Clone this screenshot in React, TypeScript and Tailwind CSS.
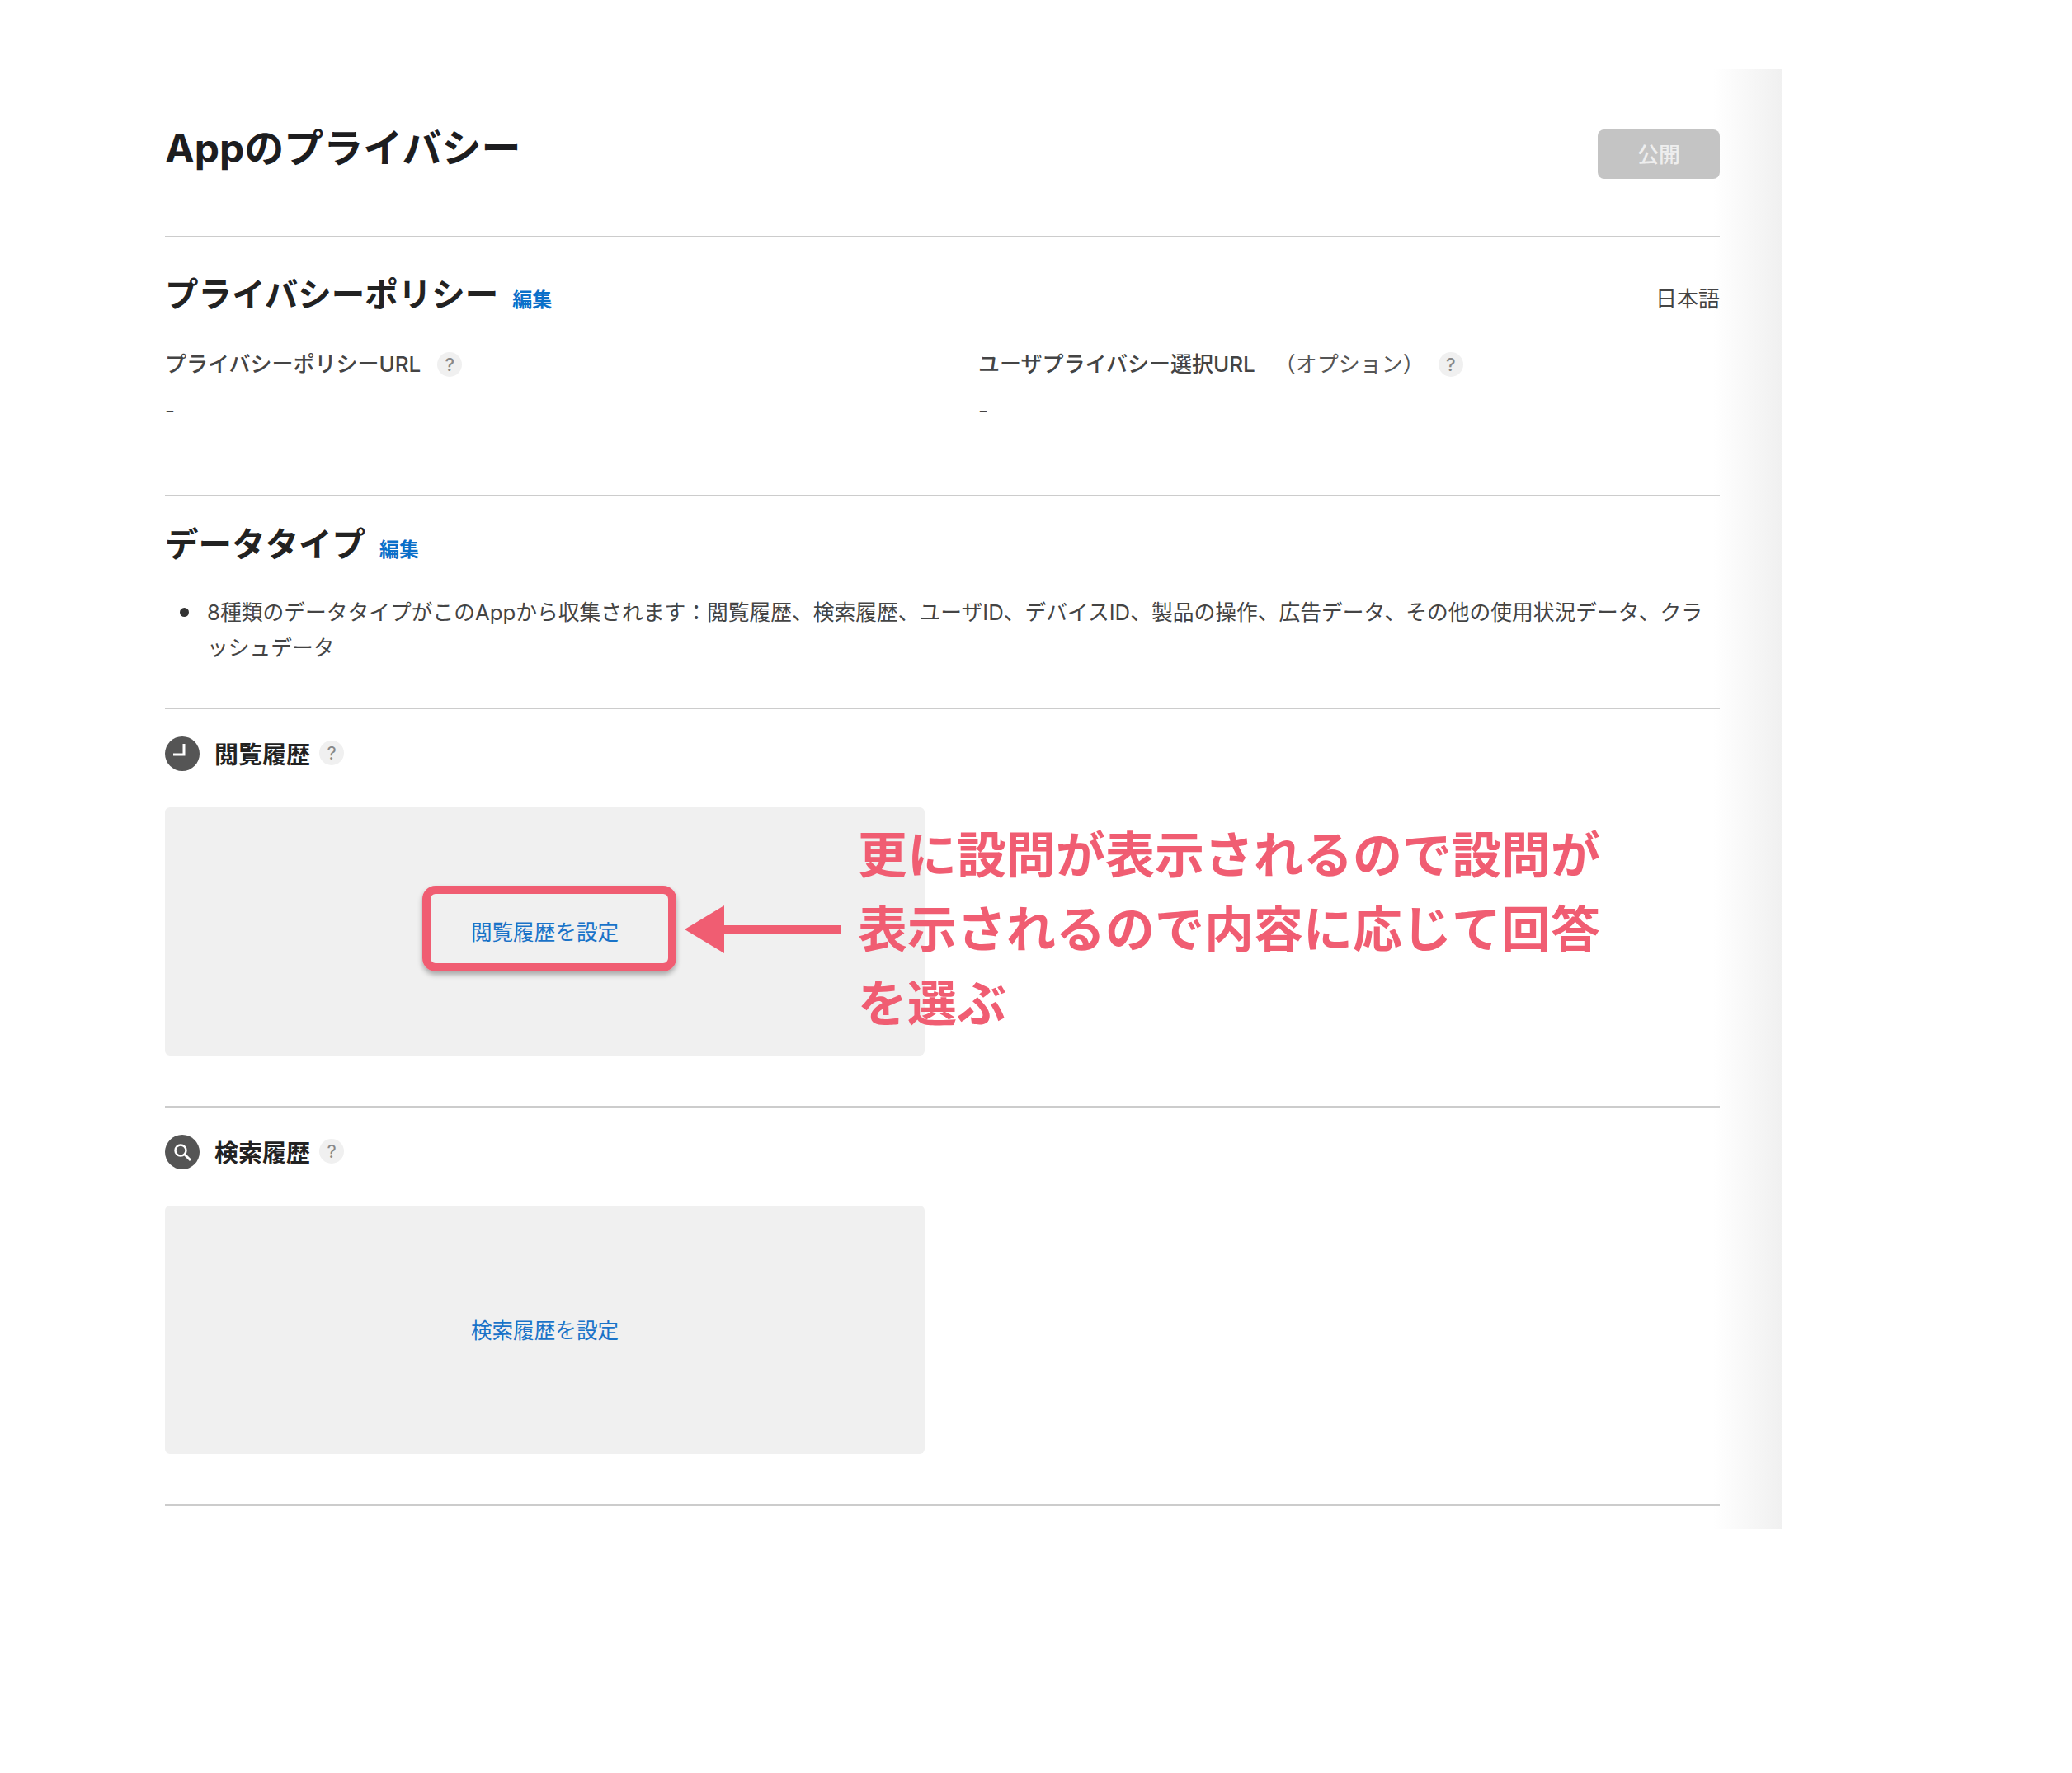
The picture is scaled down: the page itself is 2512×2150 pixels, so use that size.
const jp = "font-['Inter','Noto_Sans_CJK_JP',sans-serif]";

function Help({ className = "" }: { className?: string }) {
  return (
    <span className={`inline-flex h-[30px] w-[30px] shrink-0 items-center justify-center rounded-full bg-[#f0f0f0] text-[22px] leading-none text-[#888] ${className}`}>
      ?
    </span>
  );
}

function ClockIcon() {
  return (
    <svg viewBox="0 0 42 42" className="h-[42px] w-[42px] shrink-0 -translate-y-px">
      <circle cx="21" cy="21" r="21" fill="#555" />
      <path d="M23 9v13H10" fill="none" stroke="#fff" strokeWidth="3" />
    </svg>
  );
}

function SearchIcon() {
  return (
    <svg viewBox="0 0 42 42" className="h-[42px] w-[42px] shrink-0 -translate-y-px">
      <circle cx="21" cy="21" r="21" fill="#555" />
      <circle cx="19" cy="19" r="6.5" fill="none" stroke="#fff" strokeWidth="2.5" />
      <path d="M24 24l7 7" fill="none" stroke="#fff" strokeWidth="3" />
    </svg>
  );
}

function Edit() {
  return <a className="mb-[4px] text-[24px] leading-none font-bold text-[#0a6fc9]">編集</a>;
}

function DataType({ icon, title, action }: { icon: React.ReactNode; title: string; action: string }) {
  return (
    <section className="h-[483px] border-b-2 border-[#ccc] pt-[34px]">
      <div className="flex h-[42px] items-center">
        {icon}
        <h3 className="ml-[18px] text-[29px] leading-none font-bold text-[#222]">{title}</h3>
        <Help className="ml-[11px] -translate-y-[2px]" />
      </div>
      <div className="mt-[43px] flex h-[301px] w-[921px] items-center justify-center rounded-[6px] bg-[#f0f0f0] pt-[3px]">
        <a className="text-[25.6px] text-[#1a73c8]">{action}</a>
      </div>
    </section>
  );
}

export default function App() {
  return (
    <div className={`relative min-h-[2150px] bg-white ${jp}`}>
      <main className="relative top-[84px] h-[1770px] w-[2161px] bg-[linear-gradient(to_right,#fff_2077px,#f0f0f0_2161px)] pl-[200px] pr-[76px]">
        <header className="flex h-[204px] justify-between border-b-2 border-[#ccc]">
          <h1 className="mt-[68px] text-[48px] leading-[56px] font-bold text-[#1d1d1f]">Appのプライバシー</h1>
          <button className="mt-[73px] h-[60px] w-[148px] rounded-[8px] bg-[#c4c4c4] text-[26px] font-medium text-[#eee]">公開</button>
        </header>

        <section className="h-[314px] border-b-2 border-[#ccc]">
          <div className="flex items-end justify-between pt-[48px]">
            <div className="flex items-end gap-[17px]">
              <h2 className="text-[40.5px] leading-[44px] font-bold text-[#222]">プライバシーポリシー</h2>
              <Edit />
            </div>
            <span className="mb-[4px] text-[26px] leading-none text-[#444]">日本語</span>
          </div>
          <div className="mt-[47px] flex">
            <div className="w-[986px]">
              <div className="flex items-center gap-[20px] text-[26px] leading-[30px] font-medium text-[#444]">
                プライバシーポリシーURL
                <Help />
              </div>
              <p className="mt-[26px] text-[26px] leading-[30px] text-[#444]">-</p>
            </div>
            <div>
              <div className="flex items-center text-[26px] leading-[30px] font-medium text-[#444]">
                ユーザプライバシー選択URL
                <span className="ml-[23px] font-normal text-[#555]">（オプション）</span>
                <Help className="ml-[17px]" />
              </div>
              <p className="mt-[26px] text-[26px] leading-[30px] text-[#444]">-</p>
            </div>
          </div>
        </section>

        <section className="h-[258px] border-b-2 border-[#ccc]">
          <div className="flex items-end gap-[17px] pt-[37px]">
            <h2 className="text-[40.5px] leading-[44px] font-bold text-[#222]">データタイプ</h2>
            <Edit />
          </div>
          <ul className="mt-[38px] text-[25.75px] leading-[43px] text-[#444]">
            <li className="flex pl-[18px]">
              <span className="mt-[16px] mr-[22px] h-[11px] w-[11px] shrink-0 rounded-full bg-[#333]" />
              <span>8種類のデータタイプがこのAppから収集されます：閲覧履歴、検索履歴、ユーザID、デバイスID、製品の操作、広告データ、その他の使用状況データ、クラッシュデータ</span>
            </li>
          </ul>
        </section>

        <DataType icon={<ClockIcon />} title="閲覧履歴" action="閲覧履歴を設定" />
        <DataType icon={<SearchIcon />} title="検索履歴" action="検索履歴を設定" />
      </main>

      {/* annotation layered over the page */}
      <div className="absolute left-[512px] top-[1074px] h-[104px] w-[308px] rounded-[16px] border-[10px] border-[#f05d72] shadow-[0_4px_6px_rgba(0,0,0,0.3)]" />
      <svg viewBox="0 0 190 58" className="absolute left-[830px] top-[1098px] h-[58px] w-[190px]">
        <path d="M0 29L48 0v24h142v10H48v24z" fill="#f05d72" />
      </svg>
      <p className="absolute left-[1040px] top-[992px] w-[910px] text-[60px] leading-[90px] font-bold text-[#f05d72]">
        更に設問が表示されるので設問が表示されるので内容に応じて回答を選ぶ
      </p>
    </div>
  );
}
